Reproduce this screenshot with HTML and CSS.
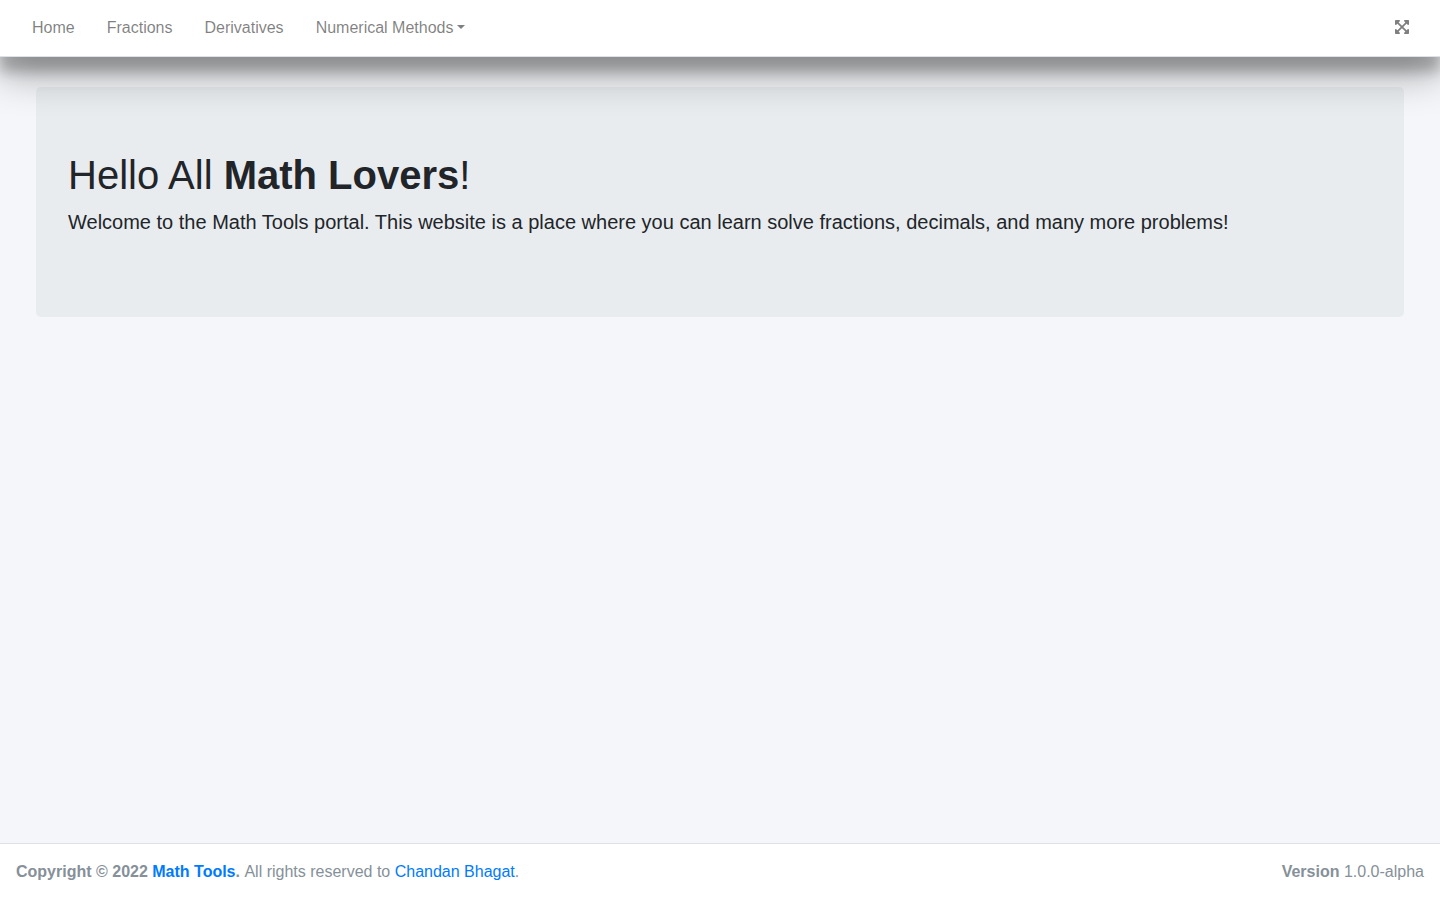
FILE: index.html
```html
<!DOCTYPE html>
<html lang="en">
<head>
<meta charset="utf-8">
<title>Math Tools</title>
<link rel="stylesheet" href="styles.css">
</head>
<body>
<div class="wrapper">
  <nav class="navbar">
    <ul class="nav-list">
      <li><a class="nav-link" href="#">Home</a></li>
      <li><a class="nav-link" href="#">Fractions</a></li>
      <li><a class="nav-link" href="#">Derivatives</a></li>
      <li><a class="nav-link dropdown-toggle" href="#" aria-haspopup="true">Numerical Methods</a></li>
    </ul>
    <button class="nav-link expand" type="button" aria-label="Toggle fullscreen">
      <svg class="icon" viewBox="0 0 448 512" aria-hidden="true"><path fill="currentColor" d="M448 344v112a23.940 23.940 0 0 1-24 24H312c-21.390 0-32.090-25.900-17-41l36.200-36.200L224 295.600 116.770 402.900 153 439c15.090 15.100 4.390 41-17 41H24a23.940 23.940 0 0 1-24-24V344c0-21.400 25.890-32.100 41-17l36.190 36.200L184.460 256 77.180 148.700 41 185c-15.100 15.100-41 4.400-41-17V56a23.940 23.940 0 0 1 24-24h112c21.390 0 32.090 25.900 17 41l-36.200 36.200L224 216.400l107.230-107.300L295 73c-15.090-15.100-4.390-41 17-41h112a23.940 23.940 0 0 1 24 24v112c0 21.400-25.890 32.100-41 17l-36.190-36.200L263.540 256l107.280 107.300L407 327.100c15.100-15.200 41-4.500 41 16.900z"/></svg>
    </button>
  </nav>
  <main class="content">
    <section class="jumbotron">
      <h1 class="title">Hello All <b>Math Lovers</b>!</h1>
      <p class="lead">Welcome to the Math Tools portal. This website is a place where you can learn solve fractions, decimals, and many more problems!</p>
    </section>
  </main>
  <footer class="footer">
    <div><strong>Copyright © 2022 <a href="#">Math Tools</a>. </strong>All rights reserved to <a href="#">Chandan Bhagat</a>.</div>
    <div><b>Version</b> 1.0.0-alpha</div>
  </footer>
</div>
</body>
</html>
```
FILE: styles.css
```css
*, *::before, *::after { box-sizing: border-box; }
body {
  margin: 0;
  font: 400 16px/24px "Liberation Sans", Arial, sans-serif;
  color: #212529;
  background: #f4f6f9;
}
a { color: #007bff; text-decoration: none; }
.wrapper {
  display: flex;
  flex-direction: column;
  min-height: 100vh;
  overflow-x: hidden;
}
.navbar {
  display: flex;
  align-items: center;
  justify-content: space-between;
  padding: 8px 15px 8px 16px;
  background: #fff;
  border-bottom: 1px solid #dee2e6;
  position: relative;
  z-index: 1;
  box-shadow: 0 19px 38px rgba(0, 0, 0, .3), 0 15px 12px rgba(0, 0, 0, .22);
}
.nav-list {
  display: flex;
  margin: 0;
  padding: 0;
  list-style: none;
}
.nav-link {
  display: block;
  height: 40px;
  padding: 8px 16px;
  color: rgba(0, 0, 0, .5);
}
.dropdown-toggle::after {
  content: "";
  display: inline-block;
  margin-left: 4px;
  vertical-align: 4px;
  border: 4px solid transparent;
  border-top-color: currentColor;
  border-bottom: 0;
}
.expand {
  border: 0;
  background: none;
  font: inherit;
}
.icon { display: block; width: 14px; height: 16px; margin: 2px 0 4px; }
.content {
  flex: 1;
  padding: 30px 36px;
}
.jumbotron {
  padding: 64px 32px;
  background: #e9ecef;
  border-radius: 5px;
}
.title {
  margin: 0 0 8px;
  font-size: 40px;
  line-height: 48px;
  font-weight: 400;
}
.lead {
  margin: 0 0 16px;
  font-size: 20px;
  line-height: 30px;
}
.footer {
  display: flex;
  justify-content: space-between;
  padding: 16px;
  color: #869099;
  background: #fff;
  border-top: 1px solid #dee2e6;
}
```
